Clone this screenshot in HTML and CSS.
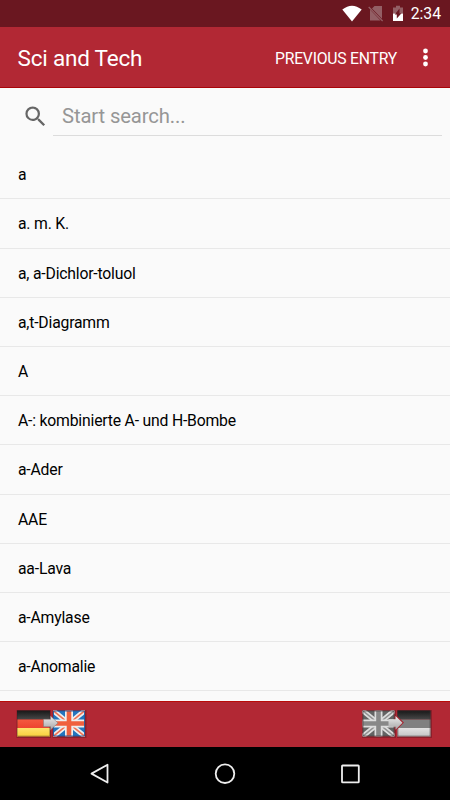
FILE: index.html
```html
<!DOCTYPE html>
<html lang="en">
<head>
  <meta charset="UTF-8">
  <meta name="viewport" content="width=device-width, initial-scale=1.0">
  <title>Sci and Tech</title>

  <link rel="stylesheet" href="styles.css">
</head>
<body>
  <div class="status">
    <svg class="wifi" width="20" height="17" viewBox="0 0 20 17"><path d="M0.3 4.5Q10 -3.2 19.7 4.5L10 16.5z" fill="#fff"/></svg>
    <svg class="nosim" width="16" height="17" viewBox="0 0 16 17">
      <path d="M6.500 1H14v12.800L4 3.500zM2 4.500L12.500 15.500H2z" fill="#935f65"/>
      <path d="M0.7 2L14.600 16" stroke="#935f65" stroke-width="1.2"/>
    </svg>
    <svg class="battery" width="12" height="17" viewBox="0 0 12 17">
      <path d="M1 2.500h3V.7h4v1.800h3V8.500H1z" fill="#935f65"/>
      <path d="M1 8.500h10V16H1z" fill="#fff"/>
      <path d="M7.500 3.500v4.700h2L4.800 13.500V9.500H2.800z" fill="#6a1720"/>
    </svg>
    <span>2:34</span>
  </div>

  <div class="toolbar">
    <h1>Sci and Tech</h1>
    <span class="previous">PREVIOUS ENTRY</span>
    <svg class="more" width="6" height="20" viewBox="0 0 6 20" fill="#fff">
      <circle cx="3.500" cy="3" r="2.400"/><circle cx="3.500" cy="9.500" r="2.400"/><circle cx="3.500" cy="16" r="2.400"/>
    </svg>
  </div>

  <div class="search">
    <svg width="27" height="27" viewBox="0 0 24 24"><path fill="#666" d="M15.500 14h-.79l-.28-.27A6.471 6.471 0 0 0 16 9.500 6.500 6.500 0 1 0 9.500 16c1.610 0 3.090-.59 4.230-1.570l.27.28v.79l5 4.990L20.490 19l-4.990-5zm-6 0C7.010 14 5 11.990 5 9.500S7.010 5 9.500 5 14 7.010 14 9.500 11.990 14 9.500 14z"/></svg>
    <div class="field">Start search...</div>
  </div>

  <ul>
    <li>a</li>
    <li>a. m. K.</li>
    <li>a, a-Dichlor-toluol</li>
    <li>a,t-Diagramm</li>
    <li>A</li>
    <li>A-: kombinierte A- und H-Bombe</li>
    <li>a-Ader</li>
    <li>AAE</li>
    <li>aa-Lava</li>
    <li>a-Amylase</li>
    <li>a-Anomalie</li>
    <li></li>
  </ul>

  <div class="languages">
    <svg width="74" height="32" viewBox="0 0 74 32">
      <defs>
        <linearGradient id="black" x2="0" y2="1"><stop stop-color="#171717"/><stop offset="1" stop-color="#484848"/></linearGradient>
        <linearGradient id="red" x2="0" y2="1"><stop stop-color="#f4593f"/><stop offset="1" stop-color="#ed4430"/></linearGradient>
        <linearGradient id="gold" x2="0" y2="1"><stop stop-color="#ffe36c"/><stop offset="1" stop-color="#f9d03c"/></linearGradient>
        <linearGradient id="arrow" x2="0" y2="1"><stop stop-color="#eee"/><stop offset="1" stop-color="#a5a5a5"/></linearGradient>
        <clipPath id="clip"><path d="M0 0h32v26H0z"/></clipPath>
      </defs>
      <g fill="#5d1720" opacity=".45">
        <path d="M1.500 1h34.500v28H1.500zM37.500 1h34v28h-34z"/>
        <path d="M2 2h33.500v26.500H2zM38 2h33v26.500H38z"/>
      </g>
      <g transform="translate(2 1.500)">
        <path d="M0 0h33v9H0z" fill="url(#black)"/>
        <path d="M0 9h33v8.500H0z" fill="url(#red)"/>
        <path d="M0 17.500h33V26H0z" fill="url(#gold)"/>
        <path d="M.5.5h32v25H.5z" fill="none" stroke="#302020" stroke-opacity=".3"/>
      </g>
      <g transform="translate(38 1.500)" clip-path="url(#clip)">
        <path d="M0 0h32v26H0z" fill="#2474bd"/>
        <path d="M0 0l32 26M32 0L0 26" stroke="#eee" stroke-width="5"/>
        <path d="M0 0l32 26M32 0L0 26" stroke="#f07052" stroke-width="1.600"/>
        <path d="M16 0v26M0 13h32" stroke="#eee" stroke-width="8"/>
        <path d="M16 0v26M0 13h32" stroke="#f0603e" stroke-width="4.600"/>
        <path d="M.5.5h31v25H.5z" fill="none" stroke="#1d5aa0" stroke-opacity=".9"/>
      </g>
      <path d="M28.500 10.300h7V7l7.500 7-7.500 7v-3.300h-7z" fill="url(#arrow)" stroke="#777" stroke-width=".5"/>
    </svg>
    <svg width="74" height="32" viewBox="0 0 74 32">
      <defs>
        <linearGradient id="light" x2="0" y2="1"><stop stop-color="#e2e2e2"/><stop offset="1" stop-color="#c4c4c4"/></linearGradient>
      </defs>
      <g fill="#5d1720" opacity=".45">
        <path d="M2 1h34v28H2zM37 1h35v28H37z"/>
        <path d="M2.500 2h33v26.500h-33zM37.500 2h34v26.500h-34z"/>
      </g>
      <g transform="translate(2.500 1.500)" clip-path="url(#clip)">
        <path d="M0 0h32v26H0z" fill="#636363"/>
        <path d="M0 0l32 26M32 0L0 26" stroke="#ddd" stroke-width="5"/>
        <path d="M0 0l32 26M32 0L0 26" stroke="#929292" stroke-width="1.600"/>
        <path d="M16 0v26M0 13h32" stroke="#ddd" stroke-width="8"/>
        <path d="M16 0v26M0 13h32" stroke="#888" stroke-width="4.600"/>
        <path d="M.5.5h31v25H.5z" fill="none" stroke="#444" stroke-opacity=".7"/>
      </g>
      <g transform="translate(37.500 1.500)">
        <path d="M0 0h33v9H0z" fill="url(#black)"/>
        <path d="M0 9h33v8.500H0z" fill="#808080"/>
        <path d="M0 17.500h33V26H0z" fill="url(#light)"/>
        <path d="M.5.5h32v25H.5z" fill="none" stroke="#333" stroke-opacity=".4"/>
      </g>
      <path d="M37 7l7 6.500-7 7z" fill="#a52631"/>
      <path d="M28.500 10.300h7V7l7 6.800-7 7v-3.100h-7z" fill="url(#arrow)"/>
    </svg>
  </div>

  <div class="nav">
    <svg width="22" height="24" viewBox="0 0 22 24"><path d="M18.500 2.700v17.800L2.500 11.600z"/></svg>
    <svg width="22" height="24" viewBox="0 0 22 24"><circle cx="11" cy="11.700" r="9.300"/></svg>
    <svg width="22" height="24" viewBox="0 0 22 24"><rect x="3" y="3.500" width="16.800" height="16.800" rx=".6"/></svg>
  </div>
</body>
</html>
```
FILE: styles.css
```css
body {
  margin: 0;
  width: 450px;
  height: 800px;
  overflow: hidden;
  display: flex;
  flex-direction: column;
  background-color: #fafafa;
  font-family: Roboto, "Liberation Sans", sans-serif;
  font-size: 15.75px;
  color: #000;
}

svg {
  display: block;
  flex: none;
}

.status, .toolbar, .search, .languages, .nav {
  display: flex;
  align-items: center;
  flex: none;
  box-sizing: border-box;
}

.status {
  height: 27px;
  padding-right: 9px;
  justify-content: flex-end;
  background-color: #6a1720;
  color: #fff;
}

.nosim {
  margin-left: 6px;
}

.battery {
  margin: 0 7px 0 8px;
}

.toolbar {
  height: 61px;
  padding: 2px 22px 0 17.5px;
  background-color: #b22834;
  border-bottom: 1px solid #a90509;
  color: #fff;
}

h1 {
  margin: 0 auto 0 0;
  font-size: 22.5px;
  font-weight: 400;
  letter-spacing: -0.2px;
}

.previous {
  margin-right: 25px;
  letter-spacing: -0.24px;
}

.search {
  height: 62.2px;
  padding: 0 8px 5.2px 22px;
}

.search svg {
  margin-top: -1px;
}

.field {
  flex: 1;
  height: 39px;
  margin-left: 4px;
  padding-left: 9px;
  box-sizing: border-box;
  border-bottom: 1px solid #dcdcdc;
  font-size: 20.25px;
  letter-spacing: -0.13px;
  line-height: 38px;
  color: #969696;
}

ul {
  list-style: none;
  flex: 1;
  min-height: 0;
  overflow: hidden;
  margin: 0;
  padding: 0;
}

li {
  height: 49.2px;
  line-height: 50.4px;
  padding-left: 18px;
  box-sizing: border-box;
  border-bottom: 1px solid #e8e8e8;
  letter-spacing: -0.2px;
}

.languages {
  height: 46px;
  padding: 0 16px 0 15px;
  justify-content: space-between;
  background-color: #b22834;
  border-top: 1px solid #b90b08;
}

.nav {
  height: 53px;
  padding: 0 89px;
  justify-content: space-between;
  background-color: #000;
}

.nav svg {
  fill: none;
  stroke: #eee;
  stroke-width: 1.8;
  stroke-linejoin: round;
}
```
